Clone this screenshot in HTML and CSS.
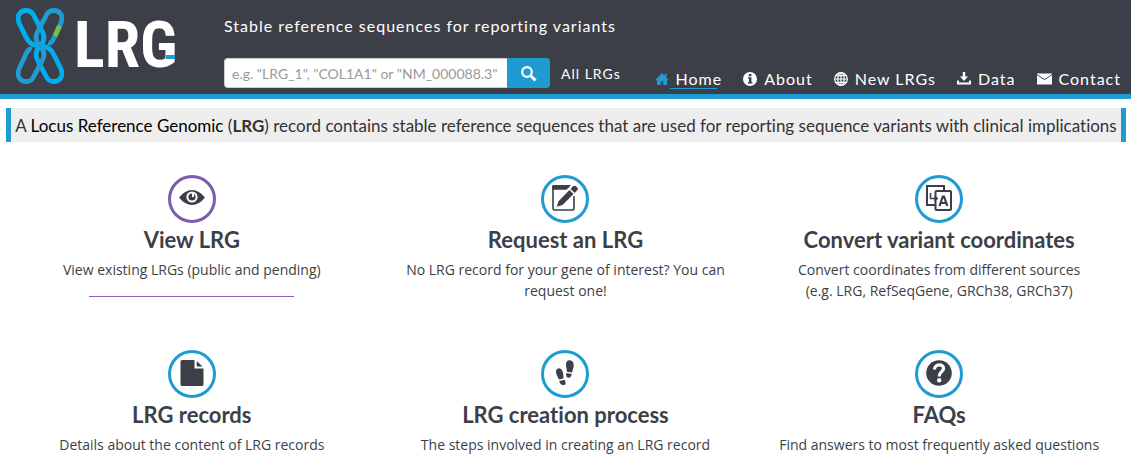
FILE: index.html
```html
<!DOCTYPE html>
<html lang="en">
<head>
    <meta charset="UTF-8">
    <meta name="viewport" content="width=device-width, initial-scale=1.0">
    <title>LRG - Locus Reference Genomic</title>

    <link rel="stylesheet" href="styles.css">
</head>
<body>
    <header class="header">
        <a class="logo" href="#">
            <svg class="logo-symbol" viewBox="0 0 48 76" fill="none" stroke-width="4.8">
                <g stroke="#00aeef">
                    <path d="M24 38 C14 37 12 33 10 29 L3.500 16 C-.5 7 5 2.500 10 2.500 C13 2.500 16 4 17.500 7 L27 25 C29 30 28 34 24 38"/>
                    <path d="M24 38 C34 39 36 43 38 47 L44.500 60 C48.500 69 43 73.500 38 73.500 C35 73.500 32 72 30.500 69 L21 51 C19 46 20 42 24 38"/>
                </g>
                <g stroke="#209cd3">
                    <path d="M32 35 C35 36 36.500 33 38 30 L44.500 16 C48.500 7 43 2.500 38 2.500 C35 2.500 32 4 30.500 7 L21 25 C19 30 20 34 24 38"/>
                    <path d="M16 41 C13 40 11.500 43 10 46 L3.500 60 C-.5 69 5 73.500 10 73.500 C13 73.500 16 72 17.500 69 L27 51 C29 46 28 42 24 38"/>
                </g>
                <path stroke="#7ac142" d="M43.600 18 L39 28"/>
            </svg>
            <span class="logo-text">LRG</span>
        </a>
        <div class="search-col">
            <p class="tagline">Stable reference sequences for reporting variants</p>
            <form class="search">
                <input class="search-input" type="text" aria-label="Search" placeholder='e.g. "LRG_1", "COL1A1" or "NM_000088.3"'>
                <button class="search-btn" type="button" aria-label="Search">
                    <svg class="icon" viewBox="0 0 16 16" fill="none" stroke="currentColor"><circle cx="6" cy="6" r="4.8" stroke-width="2.2"/><path d="M9.8 9.8 L14.5 14.5" stroke-width="3"/></svg>
                </button>
                <a class="all-link" href="#">All LRGs</a>
            </form>
        </div>
        <nav class="menu">
            <a class="menu-link active" href="#">
                <svg class="icon" viewBox="0 0 14 14" fill="currentColor"><path d="M7 1 L0 8.3 H2 V13 H5.7 V9.5 H8.3 V13 H12 V8.3 H14 L11.5 5.7 V1.8 H9.6 V3.7 Z"/></svg>
                Home</a>
            <a class="menu-link" href="#">
                <svg class="icon" viewBox="0 0 14 14"><circle cx="7" cy="7" r="7" fill="#fff"/><path fill="#3c3f47" d="M5.8 2 H8.4 V4.2 H5.8 Z M5 5.3 H8.4 V10 H9.4 V11.4 H5 V10 H6 V6.6 H5 Z"/></svg>
                About</a>
            <a class="menu-link" href="#">
                <svg class="icon" viewBox="0 0 14 14" fill="none" stroke="currentColor" stroke-width="1.200"><circle cx="7" cy="7" r="6.3"/><ellipse cx="7" cy="7" rx="3.2" ry="6.3"/><path d="M7 .7 V13.3 M.7 7 H13.3 M1.7 3.7 H12.3 M1.7 10.3 H12.3"/></svg>
                New LRGs</a>
            <a class="menu-link" href="#">
                <svg class="icon" viewBox="0 0 14 14" fill="currentColor"><path d="M5.8 0 H8.2 V4.5 H11 L7 9 L3 4.5 H5.8 Z M0 8.5 H2 V10.500 H12 V8.5 H14 V12.500 H0 Z"/></svg>
                Data</a>
            <a class="menu-link" href="#">
                <svg class="icon wide" viewBox="0 0 15 14"><path fill="#fff" d="M0 1.500 H15 V12.500 H0 Z"/><path fill="none" stroke="#3c3f47" d="M0 2.500 L6 6.800 Q7.500 7.800 9 6.800 L15 2.500"/></svg>
                Contact</a>
        </nav>
    </header>

    <div class="banner">A <b>Locus Reference Genomic</b> (<strong>LRG</strong>) record contains stable reference sequences that are used for reporting sequence variants with clinical implications</div>

    <main class="features">
        <section class="feature active">
            <a class="circle" href="#" aria-label="View LRG">
                <svg class="circle-icon" viewBox="0 0 26 26"><path fill="#3c3f47" d="M0 12.500 Q6 5 13 5 T26 12.500 Q20 20 13 20 T0 12.500 Z"/><circle cx="13" cy="12" r="5.600" fill="#fff"/><circle cx="13" cy="12" r="3.600" fill="#3c3f47"/><path fill="#fff" d="M13 12 V8.300 H15 V12 Z"/></svg>
            </a>
            <h2>View LRG</h2>
            <p>View existing LRGs (public and pending)</p>
        </section>
        <section class="feature">
            <a class="circle" href="#" aria-label="Request an LRG">
                <svg class="circle-icon" viewBox="0 0 26 26"><path fill="none" stroke="#3c3f47" stroke-width="1.600" d="M22 11 V23.500 Q22 25 20.500 25 H2.500 Q1 25 1 23.500 V2 H17"/><path fill="#3c3f47" d="M0 1.500 Q0 0 1.500 0 H19 L14.500 4.800 H0 Z M4.800 21.800 L6.500 16.200 L17.500 5 L21.500 9 L10.500 20 Z M18.600 3.900 L21 1.300 Q22.500 0 24 1.300 L25.200 2.600 Q26.500 4 25.200 5.300 L22.700 7.900 Z"/></svg>
            </a>
            <h2>Request an LRG</h2>
            <p>No LRG record for your gene of interest? You can request one!</p>
        </section>
        <section class="feature">
            <a class="circle" href="#" aria-label="Convert variant coordinates">
                <svg class="circle-icon" viewBox="0 0 26 26" fill="none" stroke="#3c3f47"><path stroke-width="2" d="M9 20 H1 V1 H18 V5"/><rect x="9.500" y="6" width="15.500" height="19" rx="1" stroke-width="2" fill="#fff"/><path stroke-width="1.600" d="M4.500 8 V13.500 H9"/><path fill="#3c3f47" stroke="none" d="M8.500 10.500 L12.500 13.500 L8.500 16.500 Z"/><path stroke-width="2.200" d="M13.500 21 L16.800 11.500 H18 L21.300 21 M15 18 H20"/></svg>
            </a>
            <h2>Convert variant coordinates</h2>
            <p>Convert coordinates from different sources<br>(e.g. LRG, RefSeqGene, GRCh38, GRCh37)</p>
        </section>
        <section class="feature">
            <a class="circle" href="#" aria-label="LRG records">
                <svg class="circle-icon" viewBox="0 0 26 26" fill="#3c3f47"><path d="M1.500 1.500 Q1.500 0 3 0 H15.500 V8.500 H24.500 V24.500 Q24.500 26 23 26 H3 Q1.500 26 1.500 24.500 Z M17.800 1 L23.500 6.500 H17.800 Z"/></svg>
            </a>
            <h2>LRG records</h2>
            <p>Details about the content of LRG records</p>
        </section>
        <section class="feature">
            <a class="circle" href="#" aria-label="LRG creation process">
                <svg class="circle-icon" viewBox="0 0 26 26" fill="#3c3f47"><path d="M4 12 C4 8.500 7 7.500 9 9 C11 10.500 11.500 14 11.500 18.500 L6.800 19.500 C6 16.500 4 15 4 12 Z M7.200 21 L12.500 19.800 C14.500 23.500 13.500 25 12 25 C9.500 25.500 8 24 7.200 21 Z M14 4.500 C14 1 16.500 -.5 19 .5 C22 1.500 22.300 6 21 9 L20 12.500 L14.800 11.700 C15 9 14 7 14 4.500 Z M14.500 13 L19.800 13.900 C19.500 16.500 18 18 16 17.700 C14.200 17.500 13.800 15.500 14.500 13 Z"/></svg>
            </a>
            <h2>LRG creation process</h2>
            <p>The steps involved in creating an LRG record</p>
        </section>
        <section class="feature">
            <a class="circle" href="#" aria-label="FAQs">
                <svg class="circle-icon" viewBox="0 0 26 26"><circle cx="13" cy="13" r="12.800" fill="#3c3f47"/><path fill="none" stroke="#fff" stroke-width="3.200" d="M8.500 9.500 C8.500 3.500 18 3.500 17.500 8.500 C17.200 12 13.200 11.500 13.200 16.500"/><circle cx="13.200" cy="20.200" r="2.200" fill="#fff"/></svg>
            </a>
            <h2>FAQs</h2>
            <p>Find answers to most frequently asked questions</p>
        </section>
    </main>
</body>
</html>
```
FILE: styles.css
```css
*, *:before, *:after{
    margin: 0;
    padding: 0;
    box-sizing: border-box;
}
body{
    background: #fff;
    color: #3c3f47;
    font-family: "Open Sans", sans-serif;
    font-size: 14px;
    line-height: 21px;
}
a{
    color: inherit;
    text-decoration: none;
}
.header{
    display: flex;
    align-items: flex-end;
    background: #3c3f47;
    border-bottom: 5px solid #1e9bd1;
    color: #fff;
    font-family: Lato, sans-serif;
    letter-spacing: 1px;
    padding: 8px 10px 6px 16px;
}
.logo{
    display: flex;
    align-items: center;
    gap: 10px;
    width: 208px;
    padding-bottom: 4px;
}
.logo-symbol{
    width: 48px;
    height: 76px;
}
.logo-text{
    position: relative;
    font-family: "Roboto Condensed", "Liberation Sans Narrow", sans-serif;
    font-size: 64px;
    font-weight: bold;
    line-height: 64px;
    letter-spacing: normal;
}
/* blue bar on the G */
.logo-text:after{
    content: "";
    position: absolute;
    right: 3px;
    top: 41px;
    width: 9px;
    height: 4px;
    background: #1e9bd1;
}
.tagline{
    font-size: 16px;
    line-height: 20px;
    margin-bottom: 22px;
}
.search{
    display: flex;
    align-items: center;
}
.search-input{
    width: 283px;
    height: 30px;
    padding: 0 7px;
    border: 1px solid #ccc;
    border-right: 0;
    border-radius: 4px 0 0 4px;
    background: #fff;
    font-family: Lato, sans-serif;
    font-size: 14px;
}
.search-input::placeholder{
    color: #999;
}
.search-btn{
    width: 43px;
    height: 30px;
    padding-top: 2px;
    border: 0;
    border-radius: 0 4px 4px 0;
    background: #1e9bd1;
    color: #fff;
}
.search-btn .icon{
    width: 16px;
    height: 16px;
}
.all-link{
    margin-left: 11px;
    font-size: 14px;
}
.icon{
    width: 14px;
    height: 14px;
    vertical-align: middle;
}
.icon.wide{
    width: 15px;
}
.menu{
    display: flex;
    gap: 21px;
    margin-left: auto;
    font-size: 16px;
}
.menu-link{
    display: flex;
    align-items: center;
    gap: 7px;
    position: relative;
    line-height: 18px;
}
.menu-link.active .icon{
    color: #1e9bd1;
}
.menu-link.active:after{
    content: "";
    position: absolute;
    left: 15px;
    right: 5px;
    bottom: -1px;
    height: 1px;
    background: #1e9bd1;
}
.banner{
    margin: 9px 5px 0 6px;
    padding: 8px 0 6px;
    border: solid #1e9bd1;
    border-width: 0 5px;
    background: #eee;
    color: #333;
    font-family: Lato, sans-serif;
    font-size: 17px;
    line-height: 20px;
    text-align: center;
    font-variant-ligatures: none;
}
.banner b{
    color: #000;
    font-weight: normal;
}
.features{
    display: grid;
    grid-template-columns: repeat(3, 1fr);
    row-gap: 49px;
    padding: 33px 5px 0;
}
.feature{
    padding: 0 16px;
    text-align: center;
}
.circle{
    display: flex;
    align-items: center;
    justify-content: center;
    width: 48px;
    height: 48px;
    margin: 0 auto;
    padding-bottom: 2px;
    border: 3px solid #1e9bd1;
    border-radius: 50%;
}
.circle-icon{
    width: 26px;
    height: 26px;
}
.feature h2{
    font-family: Lato, sans-serif;
    font-size: 22px;
    line-height: 26px;
    margin: 4px 0 6px;
    font-variant-ligatures: none;
}
.feature.active .circle{
    border-color: #7a5dab;
}
.feature.active:after{
    content: "";
    display: block;
    width: 60%;
    height: 1px;
    margin: 16px auto 0;
    background: #9b59b6;
}
```
